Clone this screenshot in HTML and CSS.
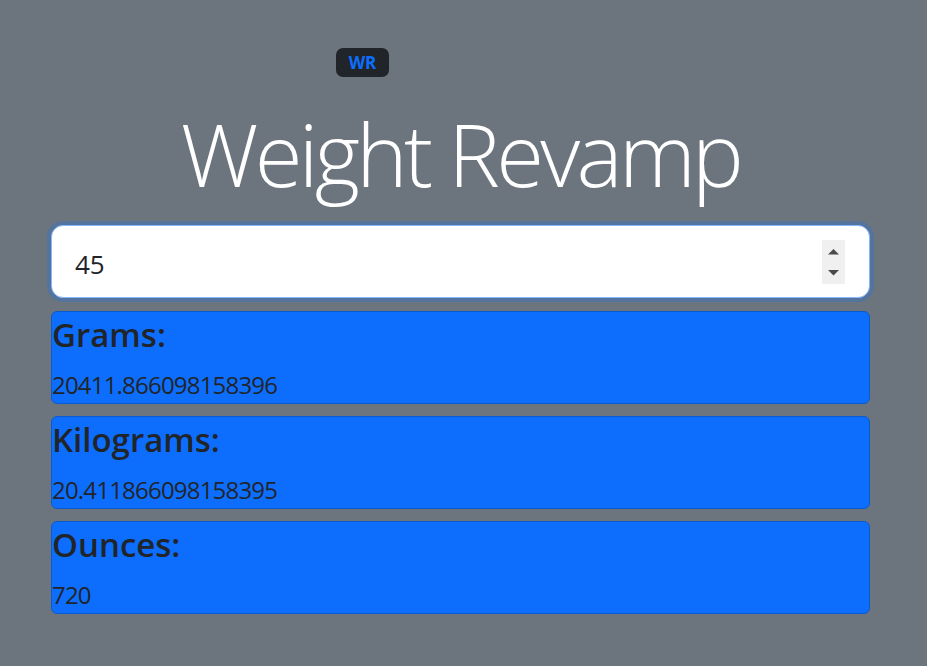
FILE: index.html
```html
<!DOCTYPE html>
<html lang="en">
<head>
<meta charset="utf-8">
<title>Weight Revamp</title>
<link rel="stylesheet" href="styles.css">
</head>
<body>
<main class="page">
  <div class="badge-row"><span class="badge">WR</span></div>
  <h1 class="title">Weight Revamp</h1>
  <div class="field">
    <input class="field-input" type="text" value="45" aria-label="Pounds">
    <div class="spinner">
      <svg width="23" height="44" viewBox="0 0 23 44">
        <path d="M6 14.5 L17 14.5 L11.5 9 Z" fill="#4a4a4a"/>
        <path d="M6 30 L17 30 L11.5 35.5 Z" fill="#4a4a4a"/>
      </svg>
    </div>
  </div>
  <section class="results">
    <div class="card">
      <h2 class="card-title">Grams:</h2>
      <p class="card-value">20411.866098158396</p>
    </div>
    <div class="card">
      <h2 class="card-title">Kilograms:</h2>
      <p class="card-value">20.411866098158395</p>
    </div>
    <div class="card">
      <h2 class="card-title">Ounces:</h2>
      <p class="card-value">720</p>
    </div>
  </section>
</main>
</body>
</html>
```
FILE: styles.css
```css
* { box-sizing: border-box; }
html, body { margin: 0; padding: 0; }
body {
  background: #6c757d;
  font-family: "Open Sans", "Noto Sans", sans-serif;
  color: #212529;
  min-height: 666px;
}
.page {
  padding: 48px 57px 0 51px;
}
.badge-row {
  display: flex;
  padding-left: 285px;
}
.badge {
  display: flex;
  align-items: center;
  justify-content: center;
  width: 53px;
  height: 29px;
  background: #212529;
  color: #0d6efd;
  border-radius: 7px;
  font-weight: 700;
  font-size: 17px;
}
.title {
  margin: 24px 0 20px;
  text-align: center;
  font-weight: 300;
  font-size: 87px;
  line-height: 104px;
  letter-spacing: -3.7px;
  color: #fff;
}
.field {
  display: flex;
  align-items: center;
  height: 73px;
  background: #fff;
  border: 1px solid #86b7fe;
  border-radius: 12px;
  box-shadow: 0 0 0 4px #54739d;
  padding: 4px 24px 0 23px;
}
.field-input {
  flex: 1;
  border: none;
  outline: none;
  background: transparent;
  padding: 0;
  font-family: "Open Sans", "Noto Sans", sans-serif;
  font-size: 26px;
  color: #212529;
}
.spinner {
  width: 23px;
  height: 44px;
  background: #f0f0f0;
  margin-top: -4px;
}
.spinner svg { display: block; }
.results {
  display: flex;
  flex-direction: column;
  gap: 12px;
  margin-top: 13px;
}
.card {
  background: #0d6efd;
  border: 1px solid #0b5bcf;
  border-radius: 6px;
}
.card-title {
  margin: 3px 0 0;
  font-size: 33px;
  font-weight: 600;
  line-height: 40px;
}
.card-value {
  margin: 12px 0 0;
  font-size: 24px;
  line-height: 36px;
  letter-spacing: -0.8px;
}
```
